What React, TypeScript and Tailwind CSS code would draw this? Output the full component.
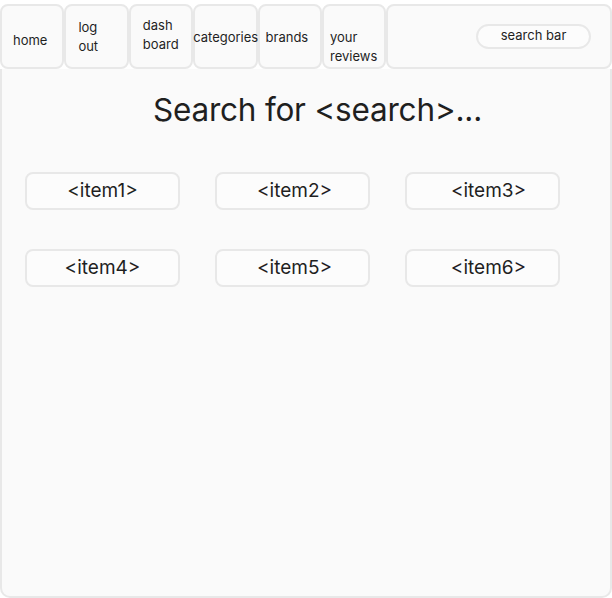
import React from 'react'

const navItems = [
  { label: ['home'], cls: 'pl-[11px] pt-[25px]' },
  { label: ['log', 'out'], cls: 'pl-[12px] pt-[12px]' },
  { label: ['dash', 'board'], cls: 'pl-[12px] pt-[10px]' },
  { label: ['categories'], cls: 'pl-0 pt-[22px] indent-[-2px]' },
  { label: ['brands'], cls: 'pl-[6px] pt-[22px]' },
  { label: ['your', 'reviews'], cls: 'pl-[6px] pt-[22px]' },
]

// text sits a bit off-centre in the middle and right columns
const items = [
  { label: '<item1>', cls: 'pl-0' },
  { label: '<item2>', cls: 'pl-[4px]' },
  { label: '<item3>', cls: 'pl-[12px]' },
  { label: '<item4>', cls: 'pl-0' },
  { label: '<item5>', cls: 'pl-[4px]' },
  { label: '<item6>', cls: 'pl-[12px]' },
]

export default function App() {
  return (
    <div className="h-[598px] w-[612px] bg-white pt-[4px] text-[#1f1f1f] font-['Inter',sans-serif]">
      <header className="flex h-[65px]">
        {navItems.map((n) => (
          <div
            key={n.label.join('')}
            className={`h-[65px] w-[64.4px] shrink-0 overflow-visible whitespace-nowrap rounded-[8px] border-2 border-[#e8e8e8] bg-[#fafafa] text-[13px] leading-[19px] ${n.cls}`}
          >
            {n.label.map((l) => (
              <div key={l}>{l}</div>
            ))}
          </div>
        ))}
        <div className="flex h-[65px] flex-1 items-start justify-end rounded-[8px] border-2 border-[#e8e8e8] bg-[#fafafa] pr-[19px] pt-[18px]">
          <div className="flex h-[25px] w-[115px] items-center justify-center rounded-full border-2 border-[#e8e8e8] bg-[#fcfcfc] pb-[2px] text-[13px]">
            search bar
          </div>
        </div>
      </header>
      <main className="h-[529px] rounded-b-[10px] border-2 border-t-0 border-[#e8e8e8] bg-[#fafafa]">
        <h1 className="pl-[23px] pt-[19px] text-center text-[31.5px] leading-[44px] tracking-[-0.2px]">
          Search for &lt;search&gt;...
        </h1>
        <div className="grid grid-cols-[155px_155px_155px] gap-x-[35px] gap-y-[39px] pl-[23px] pt-[40px]">
          {items.map((it) => (
            <div
              key={it.label}
              className={`flex h-[38px] items-center justify-center rounded-[8px] border-2 border-[#e8e8e8] bg-[#fcfcfc] pt-[1px] text-[19px] ${it.cls}`}
            >
              {it.label}
            </div>
          ))}
        </div>
      </main>
    </div>
  )
}
